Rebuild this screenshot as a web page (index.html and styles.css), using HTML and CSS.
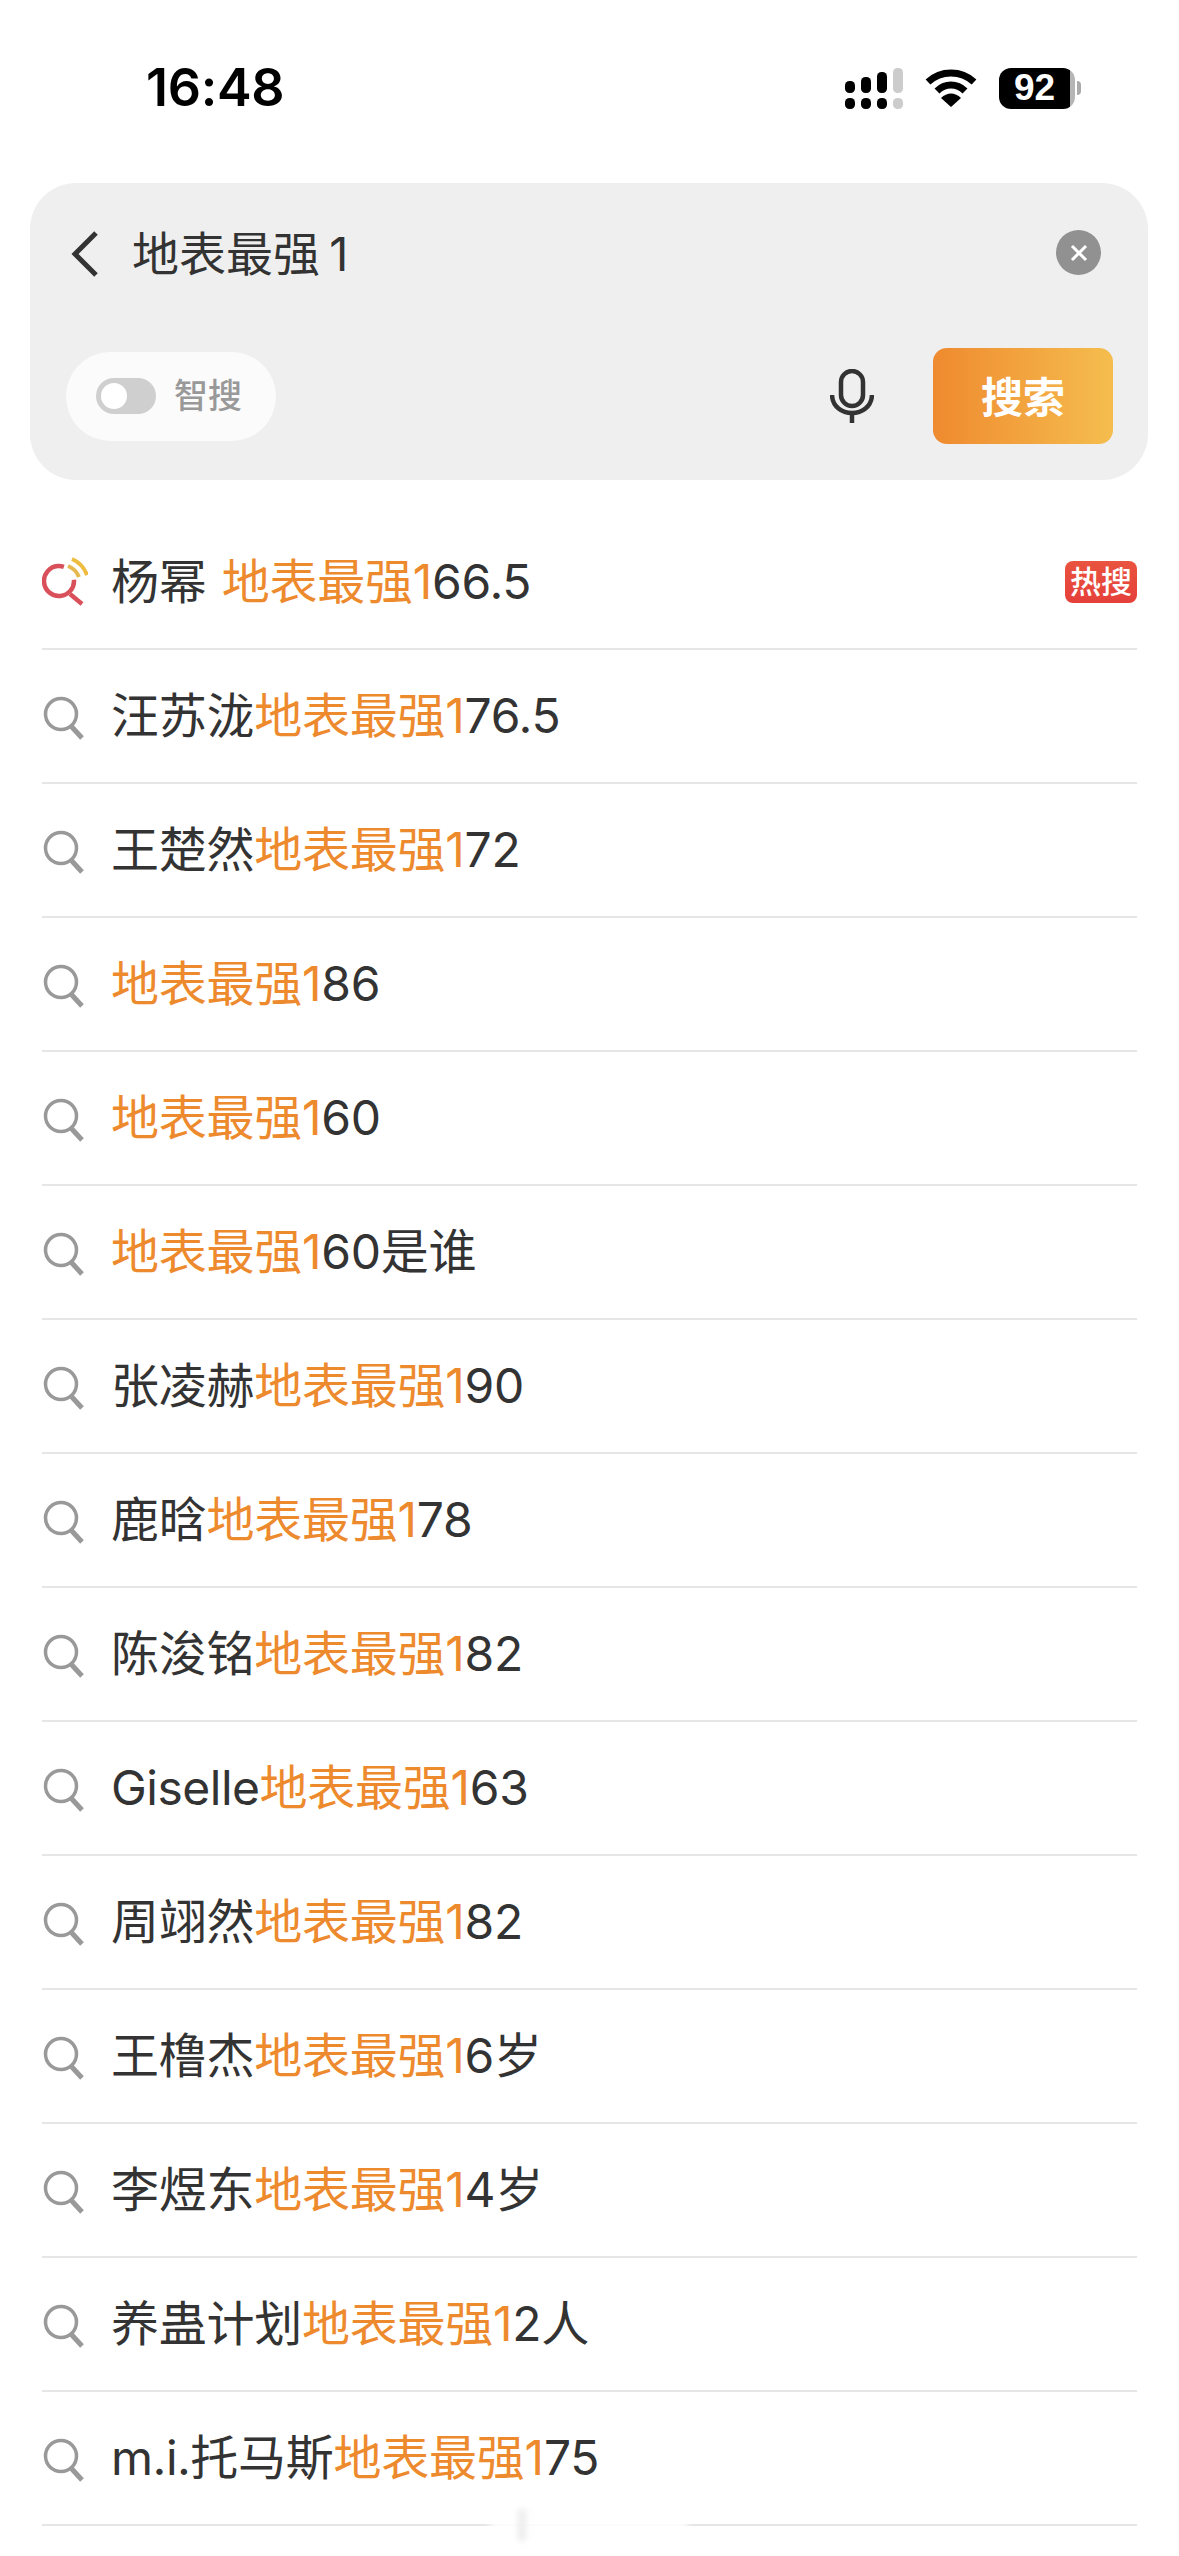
FILE: index.html
```html
<!DOCTYPE html>
<html lang="zh-CN">
<head>
    <meta charset="UTF-8">
    <meta name="viewport" content="width=device-width, initial-scale=1.0">
    <title>搜索</title>
    <link rel="stylesheet" href="styles.css">
</head>
<body>
    <div class="page">
        <div class="status-bar">
            <span class="time">16:48</span>
            <div class="status-icons">
                <svg class="signal" width="58" height="41" viewBox="0 0 58 41">
                    <rect x="0" y="13" width="10" height="12" rx="4.5" fill="#000"/>
                    <rect x="16" y="9" width="10" height="16" rx="4.5" fill="#000"/>
                    <rect x="32" y="4" width="10" height="21" rx="4.5" fill="#000"/>
                    <rect x="48" y="0" width="10" height="25" rx="4.5" fill="#ccc"/>
                    <rect x="0" y="30" width="10" height="11" rx="4.5" fill="#000"/>
                    <rect x="16" y="30" width="10" height="11" rx="4.5" fill="#000"/>
                    <rect x="32" y="30" width="10" height="11" rx="4.5" fill="#000"/>
                    <rect x="48" y="30" width="10" height="11" rx="4.5" fill="#ccc"/>
                </svg>
                <svg class="wifi" width="52" height="38" viewBox="0 0 52 38">
                    <path d="M3 13C16 1 36 1 49 13" fill="none" stroke="#000" stroke-width="7"/>
                    <path d="M12 22C20 14 32 14 40 22" fill="none" stroke="#000" stroke-width="7"/>
                    <path d="M16 29C22 23 30 23 36 29L26 38Z" fill="#000"/>
                </svg>
                <div class="battery">
                    <div class="battery-body">
                        <span class="battery-num">92</span>
                    </div>
                    <div class="battery-tip"></div>
                </div>
            </div>
        </div>

        <div class="search-panel">
            <div class="search-top">
                <svg class="back" width="28" height="46" viewBox="0 0 28 46">
                    <path d="M25 2L4 23L25 44" fill="none" stroke="#333" stroke-width="5"/>
                </svg>
                <span class="query">地表最强 1</span>
                <div class="clear">
                    <svg width="20" height="20" viewBox="0 0 20 20">
                        <path d="M3 3L17 17M17 3L3 17" stroke="#fff" stroke-width="3"/>
                    </svg>
                </div>
            </div>
            <div class="search-bottom">
                <div class="smart-pill">
                    <div class="toggle"><div class="knob"></div></div>
                    <span class="smart-label">智搜</span>
                </div>
                <svg class="mic" width="44" height="54" viewBox="0 0 44 54">
                    <rect x="11" y="2" width="22" height="35" rx="11" fill="none" stroke="#333" stroke-width="4.5"/>
                    <path d="M2 26C3 50 41 50 42 26" fill="none" stroke="#333" stroke-width="4.5"/>
                    <path d="M22 44V54" stroke="#333" stroke-width="4.5"/>
                </svg>
                <div class="search-btn">搜索</div>
            </div>
        </div>

        <ul class="suggest-list">
            <li class="suggest hot">
                <svg class="q-icon" width="46" height="50" viewBox="0 0 46 50">
                    <circle cx="17" cy="24" r="15" fill="none" stroke="#d9505a" stroke-width="4.5" stroke-dasharray="76.5 17.7" transform="rotate(-5 17 24)"/>
                    <path d="M28 37L40 47" stroke="#d9505a" stroke-width="4.5"/>
                    <path d="M26 9C31 11 35 15 37 20" fill="none" stroke="#e5b94f" stroke-width="4"/>
                    <path d="M30 2C37 5 42 10 45 18" fill="none" stroke="#eebc3f" stroke-width="4"/>
                </svg>
                <span class="suggest-text">杨幂 <em>地表最强1</em>66.5</span>
                <span class="hot-tag">热搜</span>
            </li>
            <li class="suggest">
                <svg class="q-icon" width="46" height="50" viewBox="0 0 46 50"><use href="#search-icon"/></svg>
                <span class="suggest-text">汪苏泷<em>地表最强1</em>76.5</span>
            </li>
            <li class="suggest">
                <svg class="q-icon" width="46" height="50" viewBox="0 0 46 50"><use href="#search-icon"/></svg>
                <span class="suggest-text">王楚然<em>地表最强1</em>72</span>
            </li>
            <li class="suggest">
                <svg class="q-icon" width="46" height="50" viewBox="0 0 46 50"><use href="#search-icon"/></svg>
                <span class="suggest-text"><em>地表最强1</em>86</span>
            </li>
            <li class="suggest">
                <svg class="q-icon" width="46" height="50" viewBox="0 0 46 50"><use href="#search-icon"/></svg>
                <span class="suggest-text"><em>地表最强1</em>60</span>
            </li>
            <li class="suggest">
                <svg class="q-icon" width="46" height="50" viewBox="0 0 46 50"><use href="#search-icon"/></svg>
                <span class="suggest-text"><em>地表最强1</em>60是谁</span>
            </li>
            <li class="suggest">
                <svg class="q-icon" width="46" height="50" viewBox="0 0 46 50"><use href="#search-icon"/></svg>
                <span class="suggest-text">张凌赫<em>地表最强1</em>90</span>
            </li>
            <li class="suggest">
                <svg class="q-icon" width="46" height="50" viewBox="0 0 46 50"><use href="#search-icon"/></svg>
                <span class="suggest-text">鹿晗<em>地表最强1</em>78</span>
            </li>
            <li class="suggest">
                <svg class="q-icon" width="46" height="50" viewBox="0 0 46 50"><use href="#search-icon"/></svg>
                <span class="suggest-text">陈浚铭<em>地表最强1</em>82</span>
            </li>
            <li class="suggest">
                <svg class="q-icon" width="46" height="50" viewBox="0 0 46 50"><use href="#search-icon"/></svg>
                <span class="suggest-text"><span class="latin">Giselle</span><em>地表最强1</em>63</span>
            </li>
            <li class="suggest">
                <svg class="q-icon" width="46" height="50" viewBox="0 0 46 50"><use href="#search-icon"/></svg>
                <span class="suggest-text">周翊然<em>地表最强1</em>82</span>
            </li>
            <li class="suggest">
                <svg class="q-icon" width="46" height="50" viewBox="0 0 46 50"><use href="#search-icon"/></svg>
                <span class="suggest-text">王橹杰<em>地表最强1</em>6岁</span>
            </li>
            <li class="suggest">
                <svg class="q-icon" width="46" height="50" viewBox="0 0 46 50"><use href="#search-icon"/></svg>
                <span class="suggest-text">李煜东<em>地表最强1</em>4岁</span>
            </li>
            <li class="suggest">
                <svg class="q-icon" width="46" height="50" viewBox="0 0 46 50"><use href="#search-icon"/></svg>
                <span class="suggest-text">养蛊计划<em>地表最强1</em>2人</span>
            </li>
            <li class="suggest">
                <svg class="q-icon" width="46" height="50" viewBox="0 0 46 50"><use href="#search-icon"/></svg>
                <span class="suggest-text"><span class="latin">m.i.</span>托马斯<em>地表最强1</em>75</span>
            </li>
        </ul>

        <div class="home-smudge"></div>

        <svg class="icon-defs" width="0" height="0">
            <symbol id="search-icon" viewBox="0 0 46 50">
                <circle cx="19" cy="23" r="15.5" fill="none" stroke="#999" stroke-width="3.5"/>
                <path d="M29 35L40 47" stroke="#999" stroke-width="5"/>
            </symbol>
        </svg>
    </div>
</body>
</html>
```

FILE: styles.css
```css
* {
    box-sizing: border-box;
}
body {
    margin: 0;
    background: #fff;
    font-family: Inter, "Noto Sans CJK SC", sans-serif;
    color: #333;
}
.page {
    position: relative;
    width: 1179px;
    height: 2556px;
    overflow: hidden;
    padding-top: 60px;
}
.status-bar {
    display: flex;
    justify-content: space-between;
    align-items: center;
    height: 56px;
    padding: 0 98px 0 146px;
}
.time {
    font-size: 52px;
    font-weight: 600;
    letter-spacing: -0.3px;
    color: #000;
    line-height: 56px;
}
.status-icons {
    display: flex;
    align-items: center;
    gap: 22px;
}
.battery {
    display: flex;
    align-items: center;
    gap: 2px;
}
.battery-body {
    width: 76px;
    height: 41px;
    background: linear-gradient(90deg, #000 93%, #b5b5b5 93%);
    border-radius: 12px;
    display: flex;
    align-items: center;
    justify-content: center;
    padding-right: 5px;
}
.battery-num {
    color: #fff;
    font-family: "Liberation Sans", sans-serif;
    font-weight: 700;
    font-size: 37px;
}
.battery-tip {
    width: 4px;
    height: 14px;
    background: #aaa;
    border-radius: 0 7px 7px 0;
}
.search-panel {
    margin: 67px 31px 0 30px;
    height: 297px;
    background: #efeff0;
    border-radius: 46px;
    padding: 0 36px;
}
.search-top {
    display: flex;
    align-items: center;
    height: 142px;
}
.back {
    margin-left: 5px;
    flex-shrink: 0;
}
.query {
    margin-left: 33px;
    font-size: 47px;
    word-spacing: -4px;
    flex: 1;
    line-height: 60px;
}
.clear {
    width: 45px;
    height: 45px;
    border-radius: 50%;
    background: #919191;
    display: flex;
    align-items: center;
    justify-content: center;
    margin: 0 11px 3px 0;
}
.search-bottom {
    display: flex;
    align-items: center;
    height: 96px;
    margin-top: 23px;
}
.smart-pill {
    width: 210px;
    height: 89px;
    background: #fbfbfb;
    border-radius: 45px;
    display: flex;
    align-items: center;
    gap: 18px;
    padding-left: 30px;
}
.toggle {
    width: 60px;
    height: 36px;
    background: #cfcfcf;
    border-radius: 18px;
    padding: 5px;
}
.knob {
    width: 26px;
    height: 26px;
    background: #fff;
    border-radius: 50%;
}
.smart-label {
    font-size: 34px;
    font-weight: 500;
    line-height: 36px;
    padding-bottom: 1px;
    color: #999;
}
.mic {
    margin-left: auto;
    margin-right: 59px;
}
.search-btn {
    width: 180px;
    height: 96px;
    border-radius: 14px;
    background: linear-gradient(90deg, #ef8a2f, #f5bd4e);
    color: #fff;
    font-size: 42px;
    font-weight: 700;
    padding-bottom: 3px;
    display: flex;
    align-items: center;
    justify-content: center;
    margin-right: -1px;
}
.suggest-list {
    list-style: none;
    margin: 36px 42px 0;
    padding: 0;
}
.suggest {
    display: flex;
    align-items: center;
    height: 134px;
    border-bottom: 2px solid #e6e6e6;
}
.q-icon {
    flex-shrink: 0;
    margin-right: 23px;
}
.suggest-text {
    font-size: 48px;
    letter-spacing: -0.25px;
    line-height: 60px;
    flex: 1;
    white-space: nowrap;
}
.suggest-text em {
    font-style: normal;
    color: #ee8a2e;
}
.hot .suggest-text {
    word-spacing: 2px;
}
.latin {
    letter-spacing: -0.5px;
}
.hot-tag {
    width: 72px;
    height: 42px;
    background: linear-gradient(180deg, #e9533f, #e5403b);
    color: #fff;
    border-radius: 8px;
    font-size: 31px;
    font-weight: 500;
    line-height: 42px;
    text-align: center;
}
.home-smudge {
    position: absolute;
    left: 490px;
    top: 2509px;
    width: 198px;
    height: 36px;
    background: rgba(255, 255, 255, 0.85);
    filter: blur(3px);
}
.home-smudge::before {
    content: "";
    position: absolute;
    left: 28px;
    top: 0;
    width: 8px;
    height: 32px;
    background: #ececec;
}
.icon-defs {
    position: absolute;
}
```
